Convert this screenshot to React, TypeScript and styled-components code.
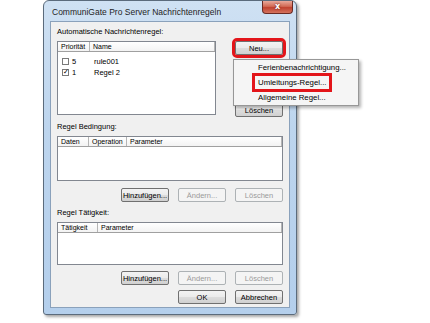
import React, { FC } from "react"
import styled, { createGlobalStyle } from "styled-components"

const GlobalStyle = createGlobalStyle`
  html, body {
    margin: 0;
    padding: 0;
    background: #fff;
  }
  body {
    font-family: "Liberation Sans", Arial, sans-serif;
    color: #000;
  }
`

interface IButton {
  label: string
  disabled?: boolean
  highlighted?: boolean
}

const Button: FC<IButton> = ({ label, disabled, highlighted }) => (
  <Btn disabled={disabled} $highlighted={highlighted}>
    {label}
  </Btn>
)

interface IListBox {
  columns: { title: string; width?: number }[]
  height: number
  width?: number
  children?: React.ReactNode
}

const ListBox: FC<IListBox> = ({ columns, height, width, children }) => (
  <List style={{ height, width }}>
    <ListHeader>
      {columns.map(c => (
        <HeaderCell key={c.title} $width={c.width}>
          {c.title}
        </HeaderCell>
      ))}
    </ListHeader>
    <Rows>{children}</Rows>
  </List>
)

const rules = [
  { prio: "5", name: "rule001", checked: false },
  { prio: "1", name: "Regel 2", checked: true },
]

const menuItems = ["Ferienbenachrichtigung...", "Umleitungs-Regel...", "Allgemeine Regel..."]

export default function App() {
  return (
    <Stage>
      <GlobalStyle />
      <Window>
        <TitleBar>
          <Title>CommuniGate Pro Server Nachrichtenregeln</Title>
          <Close>x</Close>
        </TitleBar>
        <Client>
          <Label>Automatische Nachrichtenregel:</Label>
          <TopRow>
            <ListBox columns={[{ title: "Priorität", width: 32 }, { title: "Name" }]} height={74} width={159}>
              {rules.map(r => (
                <RuleRow key={r.name}>
                  <Check $checked={r.checked}>{r.checked ? "✓" : ""}</Check>
                  <Prio>{r.prio}</Prio>
                  <span>{r.name}</span>
                </RuleRow>
              ))}
            </ListBox>
            <SideColumn>
              <Button label="Neu..." highlighted />
              <Button label="Löschen" />
              <Menu>
                {menuItems.map((m, i) => (
                  <MenuItem key={m}>
                    <MenuText $highlighted={i === 1}>{m}</MenuText>
                  </MenuItem>
                ))}
              </Menu>
            </SideColumn>
          </TopRow>

          <Label $top={7}>Regel Bedingung:</Label>
          <ListBox
            columns={[{ title: "Daten", width: 31 }, { title: "Operation", width: 38 }, { title: "Parameter" }]}
            height={45}
          />
          <ButtonRow $top={7}>
            <Button label="Hinzufügen..." />
            <Button label="Ändern..." disabled />
            <Button label="Löschen" disabled />
          </ButtonRow>

          <Label $top={6}>Regel Tätigkeit:</Label>
          <ListBox columns={[{ title: "Tätigkeit", width: 40 }, { title: "Parameter" }]} height={43} />
          <ButtonRow $top={6}>
            <Button label="Hinzufügen..." />
            <Button label="Ändern..." disabled />
            <Button label="Löschen" disabled />
          </ButtonRow>
          <ButtonRow $top={5}>
            <Button label="OK" />
            <Button label="Abbrechen" />
          </ButtonRow>
        </Client>
      </Window>
    </Stage>
  )
}

//---------------------------STYLES-------------------------------------------//

const Stage = styled.div`
  width: 430px;
  height: 323px;
  overflow: hidden;
  background: #fff;
  padding-left: 43px;
  box-sizing: border-box;
`

const Window = styled.div`
  width: 254px;
  height: 315px;
  box-sizing: border-box;
  border: 1px solid #5b6b7c;
  border-radius: 6px 6px 3px 3px;
  background: linear-gradient(#cfe1f3, #bdd5ee 40%, #b4cfec);
  box-shadow: 2px 2px 3px rgba(0, 0, 0, 0.35);
  padding: 0 6px 6px;
  display: flex;
  flex-direction: column;
`

const TitleBar = styled.div`
  height: 20px;
  display: flex;
  align-items: center;
  padding-left: 2px;
`

const Title = styled.div`
  font-size: 8.5px;
  color: #1e1e1e;
  padding-top: 1px;
`

const Close = styled.div`
  align-self: flex-start;
  margin-left: auto;
  margin-right: -3px;
  width: 31px;
  height: 13px;
  box-sizing: border-box;
  border: 1px solid #6a2b24;
  border-top: none;
  border-radius: 0 0 4px 4px;
  background: linear-gradient(#e9a99b, #d26a55 45%, #c0422f 55%, #d4735e);
  color: #fff;
  font-family: "DejaVu Sans", sans-serif;
  font-weight: bold;
  font-size: 8px;
  line-height: 12px;
  text-align: center;
  text-shadow: 0 0 2px #5a1a10;
`

const Client = styled.div`
  flex: 1;
  background: #f0f0f0;
  border: 1px solid #8aa1bb;
  padding: 5px 6px 0;
  display: flex;
  flex-direction: column;
`

const Label = styled.div<{ $top?: number }>`
  font-size: 7.5px;
  line-height: 10px;
  margin-top: ${p => p.$top ?? 0}px;
  margin-bottom: 4px;
`

const TopRow = styled.div`
  display: flex;
  justify-content: space-between;
`

const List = styled.div`
  box-sizing: border-box;
  border: 1px solid #828790;
  background: #fff;
  display: flex;
  flex-direction: column;
`

const ListHeader = styled.div`
  display: flex;
  height: 10px;
  box-sizing: border-box;
  border-bottom: 1px solid #a0a0a0;
  background: linear-gradient(#fff, #f3f3f3);
`

const HeaderCell = styled.div<{ $width?: number }>`
  ${p => (p.$width ? `width: ${p.$width}px;` : "flex: 1;")}
  box-sizing: border-box;
  border-right: 1px solid #b5b5b5;
  font-size: 7px;
  line-height: 9px;
  padding-left: 3px;
  white-space: nowrap;
`

const Rows = styled.div`
  padding-top: 4px;
`

const RuleRow = styled.div`
  display: flex;
  align-items: center;
  height: 11px;
  font-size: 7.5px;
  padding-left: 4px;
`

const Check = styled.span<{ $checked?: boolean }>`
  width: 7px;
  height: 7px;
  box-sizing: border-box;
  border: 1px solid #7a7a7a;
  background: #fff;
  font-size: 7px;
  line-height: 5px;
  text-align: center;
  font-family: "DejaVu Sans", sans-serif;
  margin-right: 3px;
`

const Prio = styled.span`
  width: 22px;
`

const SideColumn = styled.div`
  position: relative;
  width: 48px;
  display: flex;
  flex-direction: column;
  justify-content: space-between;
  margin-bottom: -2px;
`

const Btn = styled.button<{ $highlighted?: boolean }>`
  width: 48px;
  height: 14px;
  padding: 0;
  box-sizing: border-box;
  border: 1px solid #707070;
  border-radius: 2px;
  background: linear-gradient(#f3f3f3, #ebebeb 50%, #dddddd 51%, #d0d0d0);
  font-family: "Liberation Sans", Arial, sans-serif;
  font-size: 7.5px;
  color: #000;
  white-space: nowrap;
  ${p => (p.$highlighted ? "outline: 3px solid #e3151a; outline-offset: 0;" : "")}

  &:disabled {
    border-color: #adb2b5;
    background: #f4f4f4;
    color: #9a9a9a;
  }
`

const ButtonRow = styled.div<{ $top?: number }>`
  display: flex;
  justify-content: flex-end;
  gap: 9px;
  margin-top: ${p => p.$top ?? 0}px;
`

const Menu = styled.div`
  position: absolute;
  top: 18px;
  left: -2px;
  width: 124px;
  padding: 0;
  background: #f5f5f5;
  border: 1px solid #979797;
  box-shadow: 2px 2px 3px rgba(0, 0, 0, 0.3);
  display: flex;
  flex-direction: column;
`

const MenuItem = styled.div`
  height: 15px;
  display: flex;
  align-items: center;
  padding-left: 21px;
  font-size: 7.8px;
`

const MenuText = styled.span<{ $highlighted?: boolean }>`
  padding: 2px 3px;
  ${p => (p.$highlighted ? "outline: 3px solid #e3151a;" : "")}
`
